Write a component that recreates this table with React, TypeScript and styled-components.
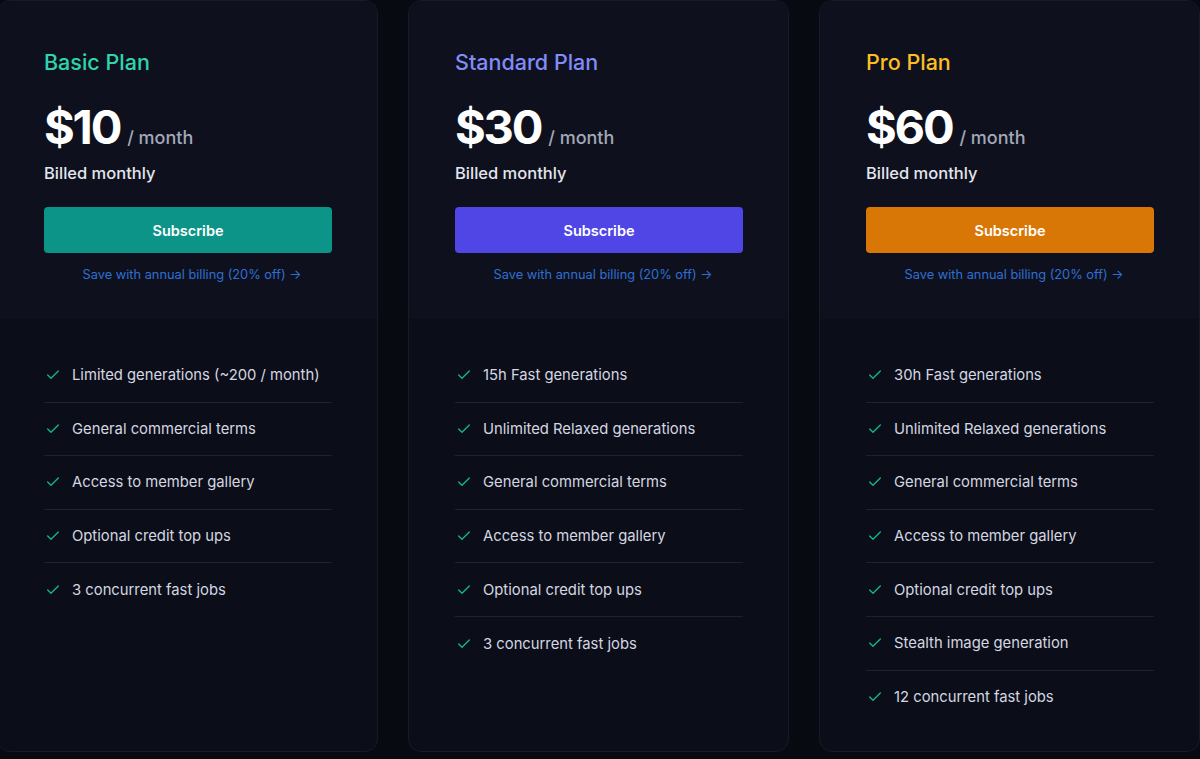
import React from "react";
import styled, { createGlobalStyle } from "styled-components";
import { Check } from "lucide-react";

interface IPlan {
  name: string;
  price: number;
  accent: string;
  button: string;
  features: string[];
}

const plans: IPlan[] = [
  {
    name: "Basic Plan",
    price: 10,
    accent: "#2dd4ae",
    button: "#0d9488",
    features: [
      "Limited generations (~200 / month)",
      "General commercial terms",
      "Access to member gallery",
      "Optional credit top ups",
      "3 concurrent fast jobs",
    ],
  },
  {
    name: "Standard Plan",
    price: 30,
    accent: "#818cf8",
    button: "#4f46e5",
    features: [
      "15h Fast generations",
      "Unlimited Relaxed generations",
      "General commercial terms",
      "Access to member gallery",
      "Optional credit top ups",
      "3 concurrent fast jobs",
    ],
  },
  {
    name: "Pro Plan",
    price: 60,
    accent: "#fbbf24",
    button: "#d97706",
    features: [
      "30h Fast generations",
      "Unlimited Relaxed generations",
      "General commercial terms",
      "Access to member gallery",
      "Optional credit top ups",
      "Stealth image generation",
      "12 concurrent fast jobs",
    ],
  },
];

const GlobalStyle = createGlobalStyle`
  html, body {
    margin: 0;
    padding: 0;
    background: #080a12;
    overflow: hidden;
  }
  body {
    font-family: Inter, "Noto Sans", sans-serif;
    -webkit-font-smoothing: antialiased;
  }
`;

export default function App() {
  return (
    <>
      <GlobalStyle />
      <Page>
        {plans.map((plan) => (
          <Card key={plan.name}>
            <Header>
              <Title color={plan.accent}>{plan.name}</Title>
              <PriceRow>
                <Amount>${plan.price}</Amount>
                <Period>/ month</Period>
              </PriceRow>
              <Billed>Billed monthly</Billed>
              <SubscribeButton bg={plan.button}>Subscribe</SubscribeButton>
              <AnnualLink>Save with annual billing (20% off) →</AnnualLink>
            </Header>
            <Features>
              {plan.features.map((f) => (
                <Feature key={f}>
                  <Check size={16} strokeWidth={2} color="#10b981" />
                  <span>{f}</span>
                </Feature>
              ))}
            </Features>
          </Card>
        ))}
      </Page>
    </>
  );
}

const Page = styled.div`
  display: flex;
  gap: 30px;
  height: 752px;
  width: 1203px;
  margin-left: -3px;
`;

const Card = styled.div`
  flex: 0 0 381px;
  box-sizing: border-box;
  display: flex;
  flex-direction: column;
  background: #0b0e19;
  border: 1px solid #161b27;
  border-radius: 13px;
  overflow: hidden;
`;

const Header = styled.div`
  display: flex;
  flex-direction: column;
  height: 318px;
  box-sizing: border-box;
  padding: 46px 45px 0 46px;
  background: #0e111d;
`;

const Title = styled.div`
  color: ${({ color }: { color: string }) => color};
  font-size: 21.5px;
  font-weight: 500;
  line-height: 30px;
`;

const PriceRow = styled.div`
  display: flex;
  align-items: baseline;
  gap: 7px;
  margin-top: 21px;
`;

const Amount = styled.span`
  color: #ffffff;
  font-size: 47px;
  font-weight: 700;
  line-height: 58px;
  letter-spacing: -2.2px;
`;

const Period = styled.span`
  color: #a3a8b8;
  font-size: 18px;
  font-weight: 500;
`;

const Billed = styled.div`
  color: #e4e6ee;
  font-size: 16.5px;
  font-weight: 500;
  line-height: 22px;
  margin-top: 6px;
`;

const SubscribeButton = styled.button`
  margin-top: 23px;
  height: 46px;
  width: 100%;
  border: none;
  border-radius: 4px;
  background: ${({ bg }: { bg: string }) => bg};
  color: #ffffff;
  font-family: inherit;
  font-size: 14.5px;
  font-weight: 600;
`;

const AnnualLink = styled.div`
  margin-top: 12px;
  padding-left: 8px;
  text-align: center;
  color: #2f6fd4;
  font-size: 12.8px;
  line-height: 20px;
`;

const Features = styled.ul`
  list-style: none;
  margin: 0;
  padding: 30px 45px 0 46px;
`;

const Feature = styled.li`
  display: flex;
  align-items: center;
  gap: 11px;
  height: 53.6px;
  box-sizing: border-box;
  padding-left: 1px;
  color: #d4d7e1;
  font-size: 14.8px;
  border-bottom: 1px solid #1d2230;

  &:last-child {
    border-bottom: none;
  }
`;
